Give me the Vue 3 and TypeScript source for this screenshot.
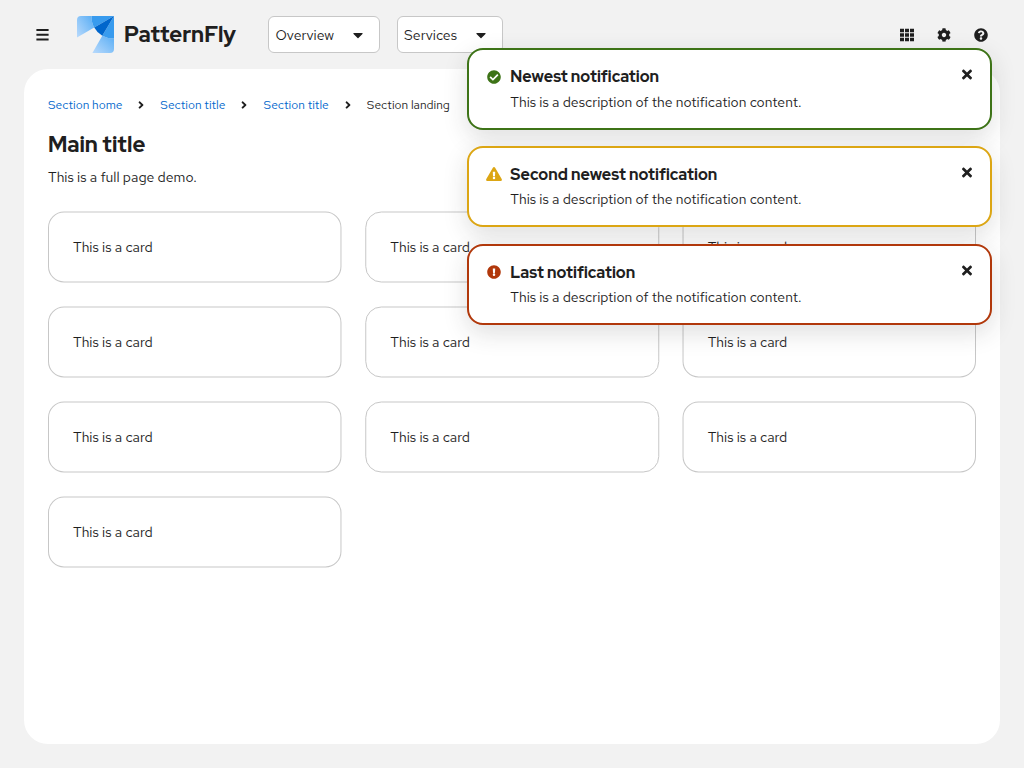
<script setup lang="ts">
type Status = 'success' | 'warning' | 'danger'
interface Notice { status: Status; title: string; viewBox: string; icon: string }

const sections: string[] = ['Section home', 'Section title', 'Section title']
const menus: string[] = ['Overview', 'Services']
const cards: string[] = Array.from({ length: 10 }, () => 'This is a card')

const notices: Notice[] = [
  {
    status: 'success', title: 'Newest notification', viewBox: '0 0 512 512',
    icon: 'M504 256c0 136.967-111.033 248-248 248S8 392.967 8 256 119.033 8 256 8s248 111.033 248 248zM227.314 387.314l184-184c6.248-6.248 6.248-16.379 0-22.627l-22.627-22.627c-6.248-6.249-16.379-6.249-22.628 0L216 308.118l-70.059-70.059c-6.248-6.248-16.379-6.248-22.628 0l-22.627 22.627c-6.248 6.248-6.248 16.379 0 22.627l104 104c6.249 6.249 16.379 6.249 22.628.001z',
  },
  {
    status: 'warning', title: 'Second newest notification', viewBox: '0 0 576 512',
    icon: 'M569.5 440c18.5 32-4.7 72-41.6 72H48.1c-36.9 0-60-40-41.6-72L246.4 24c18.5-32 64.7-32 83.2 0l239.9 416zM288 354a46 46 0 1 0 0 92 46 46 0 0 0 0-92zm-43.7-165.3l7.4 136c.4 6.4 5.6 11.3 12 11.3h48.6c6.4 0 11.6-5 12-11.3l7.4-136c.4-6.9-5.1-12.7-12-12.7h-63.4c-6.9 0-12.4 5.8-12 12.7z',
  },
  {
    status: 'danger', title: 'Last notification', viewBox: '0 0 512 512',
    icon: 'M504 256c0 137-111 248-248 248S8 393 8 256 119 8 256 8s248 111 248 248zM256 306a46 46 0 1 0 0 92 46 46 0 0 0 0-92zm-43.7-165.3l7.4 136c.4 6.4 5.6 11.3 12 11.3h48.6c6.4 0 11.6-5 12-11.3l7.4-136c.4-6.9-5.1-12.7-12-12.7h-63.4c-6.9 0-12.4 5.8-12 12.7z',
  },
]
</script>

<template>
  <div class="page">
    <header class="masthead">
      <svg class="bars" viewBox="0 0 13 12"><path d="M.4 0h12.2v1.9H.4zM.4 4.8h12.2v1.9H.4zM.4 9.6h12.2v1.9H.4z" /></svg>
      <svg class="logo" viewBox="0 0 37 37">
        <defs>
          <linearGradient id="wing-left" x1="0" y1="1" x2="1" y2="0.2"><stop offset="0" stop-color="#b9dafc" /><stop offset="1" stop-color="#5eb0f5" /></linearGradient>
          <linearGradient id="wing-bottom" x1="0" y1="1" x2="1" y2="0.1"><stop offset="0" stop-color="#b9dafc" /><stop offset="1" stop-color="#5eb0f5" /></linearGradient>
        </defs>
        <path fill="url(#wing-left)" d="M4 0H14.6Q14.3 6.4 17.2 11.6L0 21.5V4Q0 0 4 0z" />
        <path fill="url(#wing-bottom)" d="M25.3 19.8Q30.5 22.7 37 22.5V33Q37 37 33 37H15.4z" />
        <path fill="#389bee" d="M37 0H14.6Q14.3 6.4 17.2 11.6z" />
        <path fill="#389bee" d="M37 0V22.5Q30.5 22.7 25.3 19.8z" />
        <path fill="#06c" d="M37 0L17.2 11.6Q20.1 16.9 25.3 19.8z" />
      </svg>
      <span class="brand">PatternFly</span>
      <nav class="menus">
        <button v-for="menu in menus" :key="menu" class="menu" :class="menu.toLowerCase()">
          <span>{{ menu }}</span>
          <svg class="caret" viewBox="0 0 320 512"><path d="M31.3 192h257.3c17.8 0 26.7 21.5 14.1 34.1L174.1 354.8c-7.8 7.8-20.5 7.8-28.3 0L17.2 226.1C4.6 213.5 13.5 192 31.3 192z" /></svg>
        </button>
      </nav>
      <div class="tools">
        <svg viewBox="0 0 14 14"><path d="M0 .7h4v3.6H0zM5 .7h4v3.6H5zM10 .7h4v3.6H10zM0 5.2h4v3.6H0zM5 5.2h4v3.6H5zM10 5.2h4v3.6H10zM0 9.7h4v3.6H0zM5 9.7h4v3.6H5zM10 9.7h4v3.6H10z" /></svg>
        <svg viewBox="0 0 512 512"><path d="M487.4 315.7l-42.6-24.6c4.3-23.2 4.3-47 0-70.2l42.6-24.6c4.9-2.8 7.1-8.6 5.5-14-11.1-35.6-30-67.8-54.7-94.6-3.8-4.1-10-5.1-14.8-2.3L380.8 110c-17.9-15.4-38.5-27.3-60.8-35.1V25.8c0-5.6-3.9-10.5-9.4-11.7-36.7-8.2-74.3-7.8-109.2 0-5.5 1.2-9.4 6.1-9.4 11.7V75c-22.2 7.9-42.8 19.8-60.8 35.1L88.7 85.5c-4.9-2.8-11-1.9-14.8 2.3-24.7 26.7-43.6 58.9-54.7 94.6-1.7 5.4.6 11.2 5.5 14L67.3 221c-4.3 23.2-4.3 47 0 70.2l-42.6 24.6c-4.9 2.8-7.1 8.6-5.5 14 11.1 35.6 30 67.8 54.7 94.6 3.8 4.1 10 5.1 14.8 2.3l42.6-24.6c17.9 15.4 38.5 27.3 60.8 35.1v49.2c0 5.6 3.9 10.5 9.4 11.7 36.7 8.2 74.3 7.8 109.2 0 5.5-1.2 9.4-6.1 9.4-11.7v-49.2c22.2-7.9 42.8-19.8 60.8-35.1l42.6 24.6c4.9 2.8 11 1.9 14.8-2.3 24.7-26.7 43.6-58.9 54.7-94.6 1.5-5.5-.7-11.3-5.6-14.1zM256 336c-44.1 0-80-35.9-80-80s35.9-80 80-80 80 35.9 80 80-35.9 80-80 80z" /></svg>
        <svg viewBox="0 0 512 512"><path d="M504 256c0 136.997-111.043 248-248 248S8 392.997 8 256C8 119.083 119.043 8 256 8s248 111.083 248 248zM262.655 90c-54.497 0-89.255 22.957-116.549 63.758-3.536 5.286-2.353 12.415 2.715 16.258l34.699 26.31c5.205 3.947 12.621 3.008 16.665-2.122 17.864-22.658 30.113-35.797 57.303-35.797 20.429 0 45.698 13.148 45.698 32.958 0 14.976-12.363 22.667-32.534 33.976C247.128 238.528 216 254.941 216 296v4c0 6.627 5.373 12 12 12h56c6.627 0 12-5.373 12-12v-1.333c0-28.462 83.186-29.647 83.186-106.667 0-58.002-60.165-102-116.531-102zM256 338c-25.365 0-46 20.635-46 46 0 25.364 20.635 46 46 46s46-20.636 46-46c0-25.365-20.635-46-46-46z" /></svg>
      </div>
    </header>

    <main class="panel">
      <nav class="crumbs">
        <template v-for="(section, i) in sections" :key="i">
          <a class="crumb" :class="{ home: i === 0 }">{{ section }}</a>
          <svg class="angle" viewBox="0 0 256 512"><path d="M224.3 273l-136 136c-9.4 9.4-24.6 9.4-33.9 0l-22.6-22.6c-9.4-9.4-9.4-24.6 0-33.9l96.4-96.4-96.4-96.4c-9.4-9.4-9.4-24.6 0-33.9L54.3 103c9.4-9.4 24.6-9.4 33.9 0l136 136c9.5 9.4 9.5 24.6.1 34z" /></svg>
        </template>
        <span class="current">Section landing</span>
      </nav>
      <h1>Main title</h1>
      <p class="lead">This is a full page demo.</p>
      <section class="gallery">
        <article v-for="(card, i) in cards" :key="i" class="card"><span>{{ card }}</span></article>
      </section>
    </main>

    <div class="notices">
      <div v-for="notice in notices" :key="notice.status" class="notice" :class="notice.status">
        <svg class="status" :viewBox="notice.viewBox"><path :d="notice.icon" /></svg>
        <div class="body">
          <h4>{{ notice.title }}</h4>
          <p>This is a description of the notification content.</p>
        </div>
        <svg class="close" viewBox="0 0 352 512"><path d="M242.72 256l100.07-100.07c12.28-12.28 12.28-32.19 0-44.48l-22.24-22.24c-12.28-12.28-32.19-12.28-44.48 0L176 189.28 75.93 89.21c-12.28-12.28-32.19-12.28-44.48 0L9.21 111.45c-12.28 12.28-12.28 32.19 0 44.48L109.28 256 9.21 356.07c-12.28 12.28-12.28 32.19 0 44.48l22.24 22.24c12.28 12.28 32.2 12.28 44.48 0L176 322.72l100.07 100.07c12.28 12.28 32.2 12.28 44.48 0l22.24-22.24c12.28-12.28 12.28-32.19 0-44.48L242.72 256z" /></svg>
      </div>
    </div>
  </div>
</template>

<style>
body { background: #f2f2f2; }
</style>

<style scoped>
.page {
  position: relative;
  box-sizing: border-box;
  width: 1024px;
  height: 768px;
  overflow: hidden;
  padding: 0 24px 24px;
  display: flex;
  flex-direction: column;
  background: #f2f2f2;
  color: #1f1f1f;
  font-family: "Red Hat Text", Inter, sans-serif;
  font-size: 14px;
}
svg { fill: #1f1f1f; flex: none; display: block; }
h1, h4, p { margin: 0; }
span, a, h1, h4, p { white-space: nowrap; }
.brand, h1, h4 { font-family: "Red Hat Display", "Red Hat Text", Inter, sans-serif; font-weight: 800; }

.masthead { height: 69px; flex: none; display: flex; align-items: center; padding: 0 12px; }
.bars { width: 13px; height: 12px; margin-right: 28px; }
.logo { width: 37px; height: 37px; margin-right: 10px; }
.brand { width: 144px; font-size: 22px; line-height: 28px; }
.menus { display: flex; gap: 16.5px; }
.menu {
  box-sizing: border-box;
  height: 37px;
  padding: 0 16.5px 0 6.5px;
  display: flex;
  align-items: center;
  justify-content: space-between;
  border: 1px solid #c7c7c7;
  border-radius: 6px;
  background: #fff;
  color: #1f1f1f;
  font: inherit;
}
.overview { width: 112px; }
.services { width: 106.5px; }
.caret { width: 10px; height: 16px; }
.tools { margin-left: auto; display: flex; gap: 23px; }
.tools svg { width: 14px; height: 14px; }

.panel { flex: 1; box-sizing: border-box; padding: 27px 24px 0; border-radius: 24px; background: #fff; }
.crumbs { display: flex; align-items: center; height: 18px; font-size: 12px; }
.crumb { color: #06c; width: 65.5px; }
.crumb.home { width: 74.5px; }
.angle { width: 6px; height: 12px; margin: 0 16.1px 0 15.7px; }
h1 { margin-top: 16px; font-size: 22px; line-height: 29px; }
.lead { margin-top: 8px; line-height: 21px; }
.gallery { margin-top: 23px; display: grid; grid-template-columns: repeat(3, 1fr); gap: 24px; }
.card { position: relative; box-sizing: border-box; height: 71px; padding: 0 25px; display: flex; align-items: center; }
.card::before {
  content: "";
  position: absolute;
  inset: 0;
  border: 1px solid #c7c7c7;
  border-radius: 16px;
  transform: translateY(0.5px) scaleX(1.0016);
  transform-origin: left;
}
.card:nth-child(3n + 2)::before { transform: translate(0.25px, 0.5px); }
.card:nth-child(3n)::before { transform-origin: right; }

.notices { position: absolute; top: 48px; right: 32px; width: 525px; display: flex; flex-direction: column; gap: 16.25px; }
.notice {
  box-sizing: border-box;
  height: 81.5px;
  padding: 16px 18px 0 17px;
  display: flex;
  align-items: flex-start;
  border: 2px solid;
  border-radius: 16px;
  background: #fff;
  box-shadow: 0 8px 24px rgba(41, 41, 41, 0.15);
}
.success { border-color: #3d7317; }
.warning { border-color: #dca614; }
.danger { border-color: #b1380b; }
.status { width: 16px; height: 14px; margin-top: 3.5px; margin-right: 8.3px; }
.success .status { fill: #3d7317; }
.warning .status { fill: #dca614; }
.danger .status { fill: #b1380b; }
.body { flex: 1; }
.body h4 { font-size: 16px; line-height: 21px; }
.body p { margin-top: 4.6px; line-height: 21px; }
.close { width: 10px; height: 15px; margin-top: 1px; }
</style>
